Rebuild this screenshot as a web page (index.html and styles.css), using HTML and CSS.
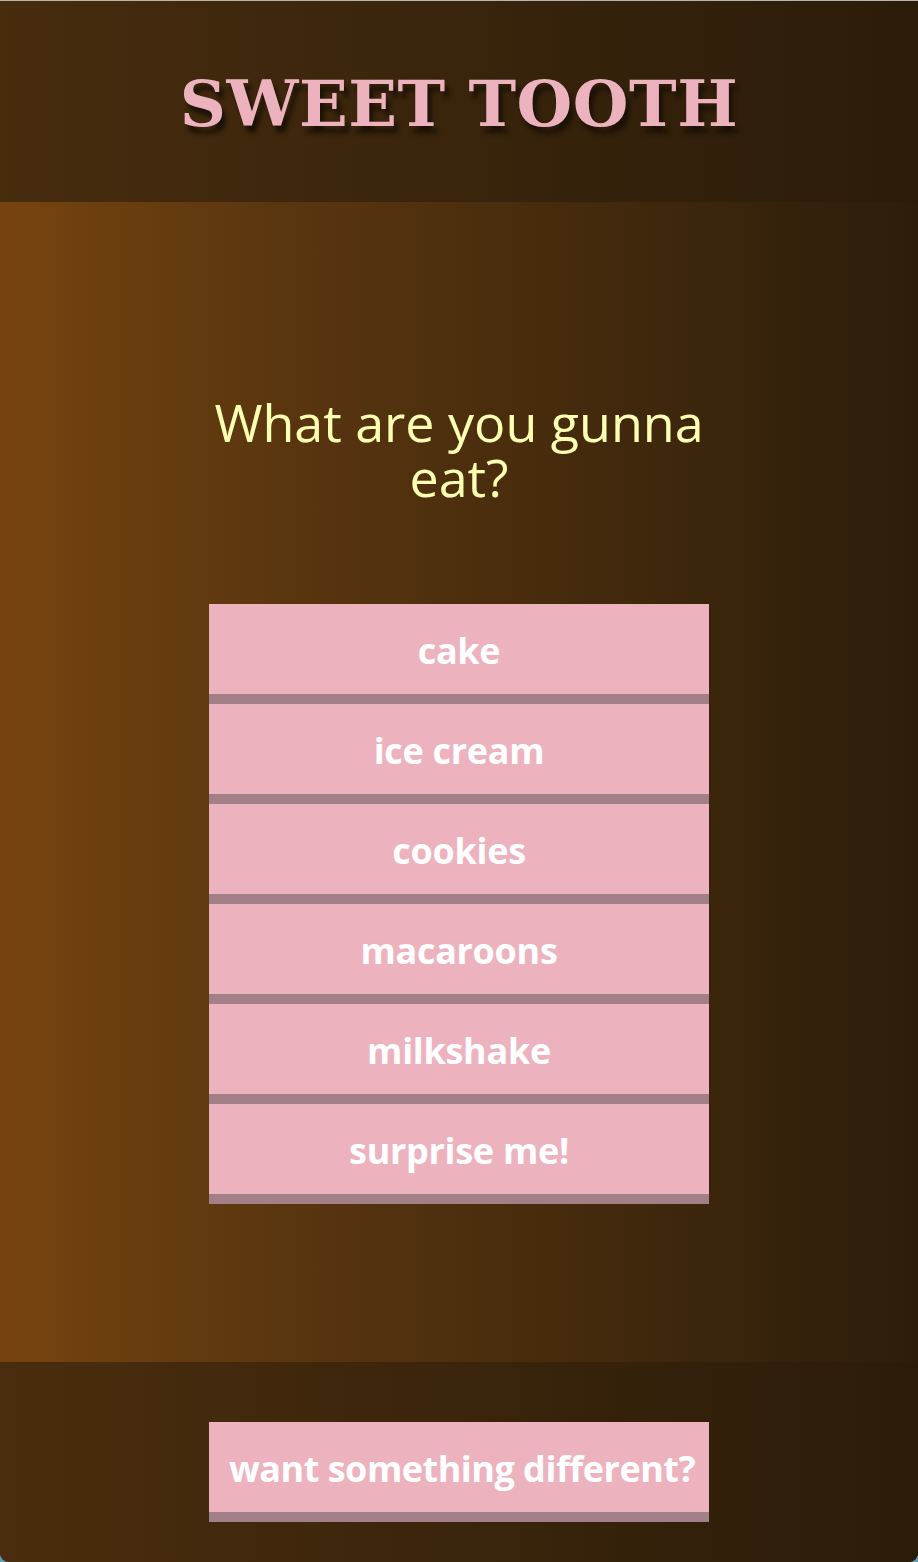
FILE: index.html
```html
<!DOCTYPE html>
<html lang="en">
<head>
<meta charset="utf-8">
<title>Sweet Tooth</title>
<link rel="stylesheet" href="styles.css">
</head>
<body>
<div class="page">
  <header class="site-header">
    <h1 class="logo">SWEET TOOTH</h1>
  </header>
  <main class="main">
    <h2 class="question">What are you gunna eat?</h2>
    <div class="choices">
      <button class="choice">cake</button>
      <button class="choice">ice cream</button>
      <button class="choice">cookies</button>
      <button class="choice">macaroons</button>
      <button class="choice">milkshake</button>
      <button class="choice">surprise me!</button>
    </div>
  </main>
  <footer class="site-footer">
    <button class="choice different">want something different?</button>
  </footer>
</div>
</body>
</html>
```

FILE: styles.css
```css
html, body {
  margin: 0;
  padding: 0;
  background: #5d9fb0;
}
.page {
  width: 918px;
  height: 1562px;
  display: flex;
  flex-direction: column;
  border-radius: 0 0 9px 9px;
  overflow: hidden;
  background: linear-gradient(to right, #4a2d0e, #2b1c09);
}
.site-header {
  height: 201px;
  border-top: 1px solid #b9b4ad;
  display: flex;
  align-items: center;
  justify-content: center;
  background: linear-gradient(to right, #472c0e, #2b1c09);
}
.logo {
  margin: 0;
  padding-top: 5px;
  font-family: "DejaVu Serif", "Liberation Serif", serif;
  font-weight: bold;
  font-size: 64px;
  letter-spacing: 0.5px;
  color: #ecb3be;
  text-shadow: 4px 7px 4px #1c1206;
  line-height: 1;
}
.main {
  height: 1160px;
  box-sizing: border-box;
  padding-top: 192px;
  display: flex;
  flex-direction: column;
  align-items: center;
  background: linear-gradient(to right, #77440f, #5a360f 30%, #2c1d0a);
}
.question {
  width: 500px;
  margin: 0 0 100px;
  font-family: "Open Sans", Lato, sans-serif;
  font-weight: normal;
  font-size: 52px;
  line-height: 55px;
  letter-spacing: 0;
  text-align: center;
  color: #ffffb3;
}
.choices {
  display: flex;
  flex-direction: column;
  width: 500px;
}
.choice {
  display: block;
  width: 500px;
  height: 100px;
  margin: 0;
  padding: 4px 0 0;
  border: 0;
  border-bottom: 10px solid #a37f87;
  background: #ecb3be;
  color: #ffffff;
  font-family: "Open Sans", Lato, sans-serif;
  font-weight: bold;
  font-size: 36px;
  letter-spacing: -0.3px;
  text-align: center;
  line-height: 1;
  cursor: pointer;
}
.site-footer {
  height: 200px;
  box-sizing: border-box;
  padding-top: 60px;
  display: flex;
  justify-content: center;
  align-items: flex-start;
  background: linear-gradient(to right, #4a2d0e, #2b1c09);
}
.different {
  white-space: nowrap;
  padding-left: 20px;
  text-align: left;
  letter-spacing: -0.5px;
  overflow: visible;
}
```
